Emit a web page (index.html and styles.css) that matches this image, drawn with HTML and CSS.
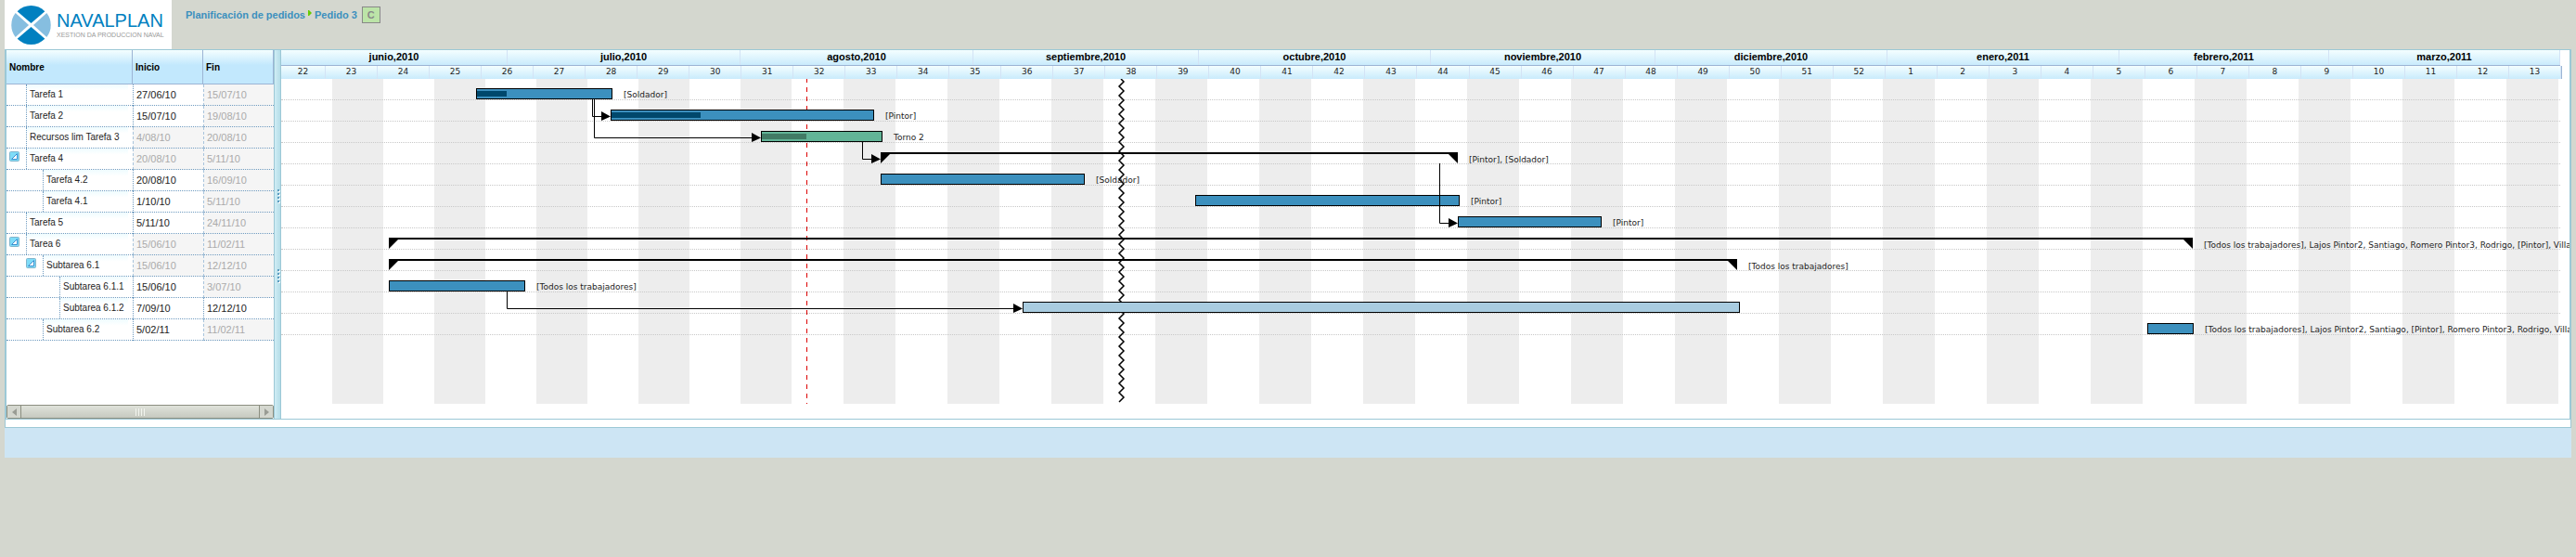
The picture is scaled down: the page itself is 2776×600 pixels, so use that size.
FILE: index.html
```html
<!DOCTYPE html>
<html lang="es">
<head>
<meta charset="utf-8">
<title>NavalPlan - Pedido 3</title>
<link rel="stylesheet" href="styles.css">
</head>
<body>
<header class="top">
  <div class="logo">
    <svg class="logo-mark" viewBox="0 0 44 44" aria-hidden="true">
      <path d="M6.8 6.800A21.500 21.500 0 0 1 37.200 6.800L22 20Z" fill="#0080c0"/>
      <path d="M6.800 37.200A21.500 21.500 0 0 0 37.200 37.200L22 24Z" fill="#0080c0"/>
      <path d="M4.800 8.800A21.500 21.500 0 0 0 4.800 35.200L19.500 22Z" fill="#86bee0"/>
      <path d="M39.200 8.800A21.500 21.500 0 0 1 39.200 35.200L24.500 22Z" fill="#86bee0"/>
    </svg>
    <div class="logo-words">
      <span class="logo-name">NAVALPLAN</span>
      <span class="logo-sub">XESTION DA PRODUCCION NAVAL</span>
    </div>
  </div>
  <nav class="crumbs">
    <a href="#">Planificación de pedidos</a>
    <svg class="crumb-arrow" viewBox="0 0 4 6" aria-hidden="true"><path d="M0 0H1L4 3L1 6H0Z" fill="#6c0"/></svg>
    <a href="#">Pedido 3</a>
    <span class="mode">C</span>
  </nav>
</header>
<main class="planner">
  <div class="panes">
    <section class="tree">
      <table class="tasks">
        <colgroup><col class="col-name"><col class="col-date"><col class="col-date"></colgroup>
        <thead><tr><th>Nombre</th><th>Inicio</th><th>Fin</th></tr></thead>
        <tbody id="rows"></tbody>
      </table>
      <div class="scroll">
        <button class="scroll-btn" aria-label="Izquierda"><svg viewBox="0 0 5 8"><path d="M5 0V8L0 4Z" fill="#999c94"/></svg></button>
        <div class="scroll-thumb"><i></i><i></i><i></i><i></i></div>
        <button class="scroll-btn" aria-label="Derecha"><svg viewBox="0 0 5 8"><path d="M0 0V8L5 4Z" fill="#999c94"/></svg></button>
      </div>
    </section>
    <div class="splitter"><div class="grip"><i></i><i></i><i></i><i></i></div><div class="grip"><i></i><i></i><i></i><i></i></div></div>
    <section class="gantt">
      <div class="months" id="months"></div>
      <div class="weeks" id="weeks"></div>
      <div class="canvas" id="canvas"></div>
    </section>
  </div>
</main>
<footer class="foot"></footer>
<script src="app.js"></script>
</body>
</html>
```
FILE: styles.css
```css
* { box-sizing: border-box; }
body {
  margin: 0;
  padding: 0 5px;
  background: #d4d7cf;
  color: #222;
  font-family: "Liberation Sans", Arial, sans-serif;
  font-size: 10px;
}
.top { display: flex; height: 53px; }
.logo {
  display: flex;
  align-items: center;
  gap: 6px;
  width: 180px;
  padding-left: 7px;
  background: #fff;
}
.logo-mark { width: 43px; height: 44px; }
.logo-words { display: flex; flex-direction: column; white-space: nowrap; }
.logo-name { font-size: 20px; line-height: 21px; color: #0080c0; }
.logo-sub { font-size: 7px; line-height: 9px; color: #999; }
.crumbs {
  display: flex;
  align-items: center;
  align-self: flex-start;
  gap: 3px;
  padding: 6px 0 0 15px;
  font-size: 11px;
  font-weight: bold;
}
.crumbs a { color: #3c90be; text-decoration: none; line-height: 18px; }
.crumb-arrow { width: 4px; height: 6px; margin-bottom: 3px; }
.mode {
  width: 20px;
  height: 18px;
  margin: 1px 0 0 2px;
  border: 1px solid #888;
  background: #bce4a8;
  color: #888;
  line-height: 16px;
  text-align: center;
}
.planner {
  border: 1px solid #9cc8d6;
  background: #fff;
  padding-bottom: 8px;
}
.panes {
  display: flex;
  border: 1px solid #9cc8d6;
  border-width: 0 1px 1px;
  height: 398px;
}
.tree {
  flex: none;
  display: flex;
  flex-direction: column;
  justify-content: space-between;
  width: 288px;
}
.tasks { width: 288px; table-layout: fixed; border-collapse: separate; border-spacing: 0; }
.col-name { width: 136px; }
.col-date { width: 76px; }
.tasks th {
  height: 37px;
  padding: 0 3px;
  border: 1px solid #9cb4d4;
  border-width: 0 1px 1px 0;
  background: linear-gradient(#f4feff, #c2e8fd 45%);
  color: #000;
  text-align: left;
}
.tasks td { height: 23px; padding: 0; border-bottom: 1px dotted #6f9bc0; overflow: hidden; white-space: nowrap; }
.tasks .date { padding: 0 3px; border-left: 1px dotted #6f9bc0; font-size: 11px; line-height: 20px; }
.tasks .off { border-left: 1px dashed #a8c4dc; background: #f5f5f5; color: #aaa; }
.name { display: flex; height: 22px; }
.name .label {
  flex: 1;
  min-width: 0;
  overflow: hidden;
  margin-right: 5px;
  padding-left: 3px;
  border-left: 1px dotted #6f9bc0;
  background: linear-gradient(#effcff, #fff 30%);
  line-height: 21px;
}
.name .indent { flex: none; width: 18px; }
.name .slot { flex: none; width: 21px; padding: 3px 0 0 3px; }
.toggle { display: block; width: 11px; height: 11px; padding: 0; border: 0; background: none; }
.toggle svg { display: block; }
.scroll { display: flex; height: 15px; border: 1px solid #8b8e80; border-radius: 2px; background: #d4d7cf; }
.scroll-btn {
  display: flex;
  align-items: center;
  justify-content: center;
  width: 14px;
  padding: 0;
  border: 0;
  background: #d4d7cf;
}
.scroll-btn svg { width: 5px; height: 8px; }
.scroll-thumb {
  flex: 1;
  display: flex;
  align-items: center;
  justify-content: center;
  gap: 2px;
  border: 1px solid #8b8e80;
  border-width: 0 1px;
  background: linear-gradient(#dfe2da, #c6c9c0);
}
.scroll-thumb i { width: 1px; height: 8px; background: #f2f4ee; }
.splitter {
  flex: none;
  display: flex;
  flex-direction: column;
  align-items: center;
  gap: 72px;
  width: 8px;
  padding: 150px 0 0 2px;
  border: 1px solid #9cc8d6;
  border-width: 0 1px;
  background: linear-gradient(90deg, #d0edf5, #b4dde8);
}
.grip { display: grid; gap: 2px; }
.grip i { width: 2px; height: 2px; background: #5b9bc0; box-shadow: 1px 1px #fff; }
.gantt { flex: 1; min-width: 0; overflow: hidden; }
.months, .weeks { display: flex; background: linear-gradient(#f4feff, #c9ebfc); text-align: center; }
.months {
  width: 2456px;
  height: 17px;
  border-bottom: 1px solid #9cb4d4;
  color: #000;
  font-size: 11px;
  font-weight: bold;
  line-height: 15px;
}
.months span { border-right: 1px solid #d3e3f5; }
.weeks {
  display: grid;
  grid-template-columns: 48px repeat(43, 1fr);
  width: 2458px;
  height: 14px;
  border-right: 1px solid #9cb4d4;
  font-family: "DejaVu Sans", Verdana, sans-serif;
  font-size: 9px;
  line-height: 13px;
}
.weeks span { border-right: 1px solid #d3e3f5; }
.canvas {
  position: relative;
  height: 350px;
  font-family: "DejaVu Sans", Verdana, sans-serif;
  font-size: 9px;
}
.bands { position: absolute; inset: 0; display: flex; }
.bands i { flex: none; width: 56px; }
.bands .narrow { width: 55px; }
.bands i:nth-child(even) { background: #ededed; }
.line { height: 23px; width: 2456px; border-bottom: 1px dotted #c8c8c8; position: relative; }
.today { position: absolute; top: 0; bottom: 0; width: 1px; background: repeating-linear-gradient(#d00 0 4px, transparent 4px 9px, #d00 9px 10px); }
.overlay { position: absolute; top: 0; left: 0; }
.bar { position: absolute; height: 12px; border: 1px solid #000; background: #3c90be; }
.bar.limiting { background: #62b497; }
.bar.light { background: #a9cce0; }
.bar .done { position: absolute; top: 2px; left: 0; height: 6px; background: #00486c; }
.bar.limiting .done { background: #417b65; }
.group { position: absolute; height: 12px; border-top: 2px solid #000; }
.group::before, .group::after { content: ""; position: absolute; top: 0; width: 10px; height: 10px; background: #000; }
.group::before { left: 0; clip-path: polygon(0 0, 100% 0, 0 100%); }
.group::after { right: 0; clip-path: polygon(0 0, 100% 0, 100% 100%); }
.res { position: absolute; line-height: 12px; white-space: nowrap; }
.foot { height: 32px; background: #cde5f4; }
```
FILE: app.js
```js
const $ = id => document.getElementById(id);

// depth, name, start, end, expandable, start editable, end editable
const tasks = [
  [0, 'Tarefa 1', '27/06/10', '15/07/10', 0, 1, 0],
  [0, 'Tarefa 2', '15/07/10', '19/08/10', 0, 1, 0],
  [0, 'Recursos lim Tarefa 3', '4/08/10', '20/08/10', 0, 0, 0],
  [0, 'Tarefa 4', '20/08/10', '5/11/10', 1, 0, 0],
  [1, 'Tarefa 4.2', '20/08/10', '16/09/10', 0, 1, 0],
  [1, 'Tarefa 4.1', '1/10/10', '5/11/10', 0, 1, 0],
  [0, 'Tarefa 5', '5/11/10', '24/11/10', 0, 1, 0],
  [0, 'Tarea 6', '15/06/10', '11/02/11', 1, 0, 0],
  [1, 'Subtarea 6.1', '15/06/10', '12/12/10', 1, 0, 0],
  [2, 'Subtarea 6.1.1', '15/06/10', '3/07/10', 0, 1, 0],
  [2, 'Subtarea 6.1.2', '7/09/10', '12/12/10', 0, 1, 1],
  [1, 'Subtarea 6.2', '5/02/11', '11/02/11', 0, 1, 0]
];
const toggle = '<button class="toggle" aria-label="Contraer"><svg width="11" height="11" viewBox="0 0 11 11">' +
  '<rect x=".5" y=".5" width="10" height="10" rx="1" fill="#7fdcf8" stroke="#7fb4cc"/>' +
  '<path d="M8.500 2.500V8.500H2.500Z" fill="#fff" stroke="#3a8fd0"/></svg></button>';
$('rows').innerHTML = tasks.map(([d, n, s, e, x, se, ee]) =>
  `<tr><td><div class="name">${'<span class="indent"></span>'.repeat(d)}<span class="slot">${x ? toggle : ''}</span>` +
  `<span class="label">${n}</span></div></td>` +
  `<td class="date${se ? '' : ' off'}">${s}</td><td class="date${ee ? '' : ' off'}">${e}</td></tr>`).join('');

const months = [['junio,2010', 244], ['julio,2010', 251], ['agosto,2010', 251], ['septiembre,2010', 243],
  ['octubre,2010', 250], ['noviembre,2010', 242], ['diciembre,2010', 250], ['enero,2011', 250],
  ['febrero,2011', 226], ['marzo,2011', 249]];
$('months').innerHTML = months.map(([m, w]) => `<span style="width:${w}px">${m}</span>`).join('');

const weeks = [];
for (let w = 22; w <= 52; w++) weeks.push(w);
for (let w = 1; w <= 13; w++) weeks.push(w);
$('weeks').innerHTML = weeks.map(w => `<span>${w}</span>`).join('');

// Horizontal positions are relative to the left edge of the timeline:
// row, start, end, resources, kind, progress
const all = '[Todos los trabajadores]';
const bars = [
  [0, 210, 357, '[Soldador]', '', 33],
  [1, 355, 639, '[Pintor]', '', 97],
  [2, 517, 648, 'Torno 2', 'limiting', 49],
  [3, 646, 1268, '[Pintor], [Soldador]', 'group'],
  [4, 646, 866, '[Soldador]', ''],
  [5, 985, 1270, '[Pintor]', ''],
  [6, 1268, 1423, '[Pintor]', ''],
  [7, 116, 2060, all + ', Lajos Pintor2, Santiago, Romero Pintor3, Rodrigo, [Pintor], Villa', 'group'],
  [8, 116, 1569, all, 'group'],
  [9, 116, 263, all, ''],
  [10, 799, 1572, '', 'light'],
  [11, 2011, 2061, all + ', Lajos Pintor2, Santiago, [Pintor], Romero Pintor3, Rodrigo, Villa', '']
];
// from x, from y, to x, to y
const links = [[335, 22, 355, 40], [337, 22, 517, 63], [626, 68, 646, 86], [1248, 91, 1268, 155], [243, 229, 799, 247]];

let zig = 'M905 0';
for (let y = 3, right = true; y <= 350; y += 5, right = !right) zig += `L${right ? 908 : 903} ${y}`;

let html = '<div class="bands">' + weeks.map((w, i) => `<i${i < 10 ? ' class="narrow"' : ''}></i>`).join('') + '</div>';
html += '<div class="line"></div>'.repeat(tasks.length);
html += '<div class="today" style="left:566px"></div>';
html += `<svg class="overlay" width="2466" height="350"><path d="${zig}" fill="none" stroke="#000" stroke-width="1.500"/></svg>`;
for (const [r, a, b, text, kind, done] of bars) {
  const top = 10 + 23 * r;
  const group = kind === 'group';
  html += `<div class="${group ? 'group' : 'bar ' + kind}" style="left:${a}px;width:${b - a}px;top:${top}px">` +
    (done ? `<div class="done" style="width:${done - 1}px"></div>` : '') + '</div>';
  if (text) html += `<span class="res" style="left:${b + 12}px;top:${top + (group ? 2 : 1)}px">${text}</span>`;
}
html += '<svg class="overlay" width="2466" height="350">' + links.map(([x, y, x2, y2]) =>
  `<path d="M${x + .5} ${y}V${y2 + .5}H${x2 - 5}" fill="none" stroke="#000"/>` +
  `<path d="M${x2 - 10} ${y2 - 5}L${x2} ${y2 + .5}L${x2 - 10} ${y2 + 5}Z"/>`).join('') + '</svg>';
$('canvas').innerHTML = html;
```
